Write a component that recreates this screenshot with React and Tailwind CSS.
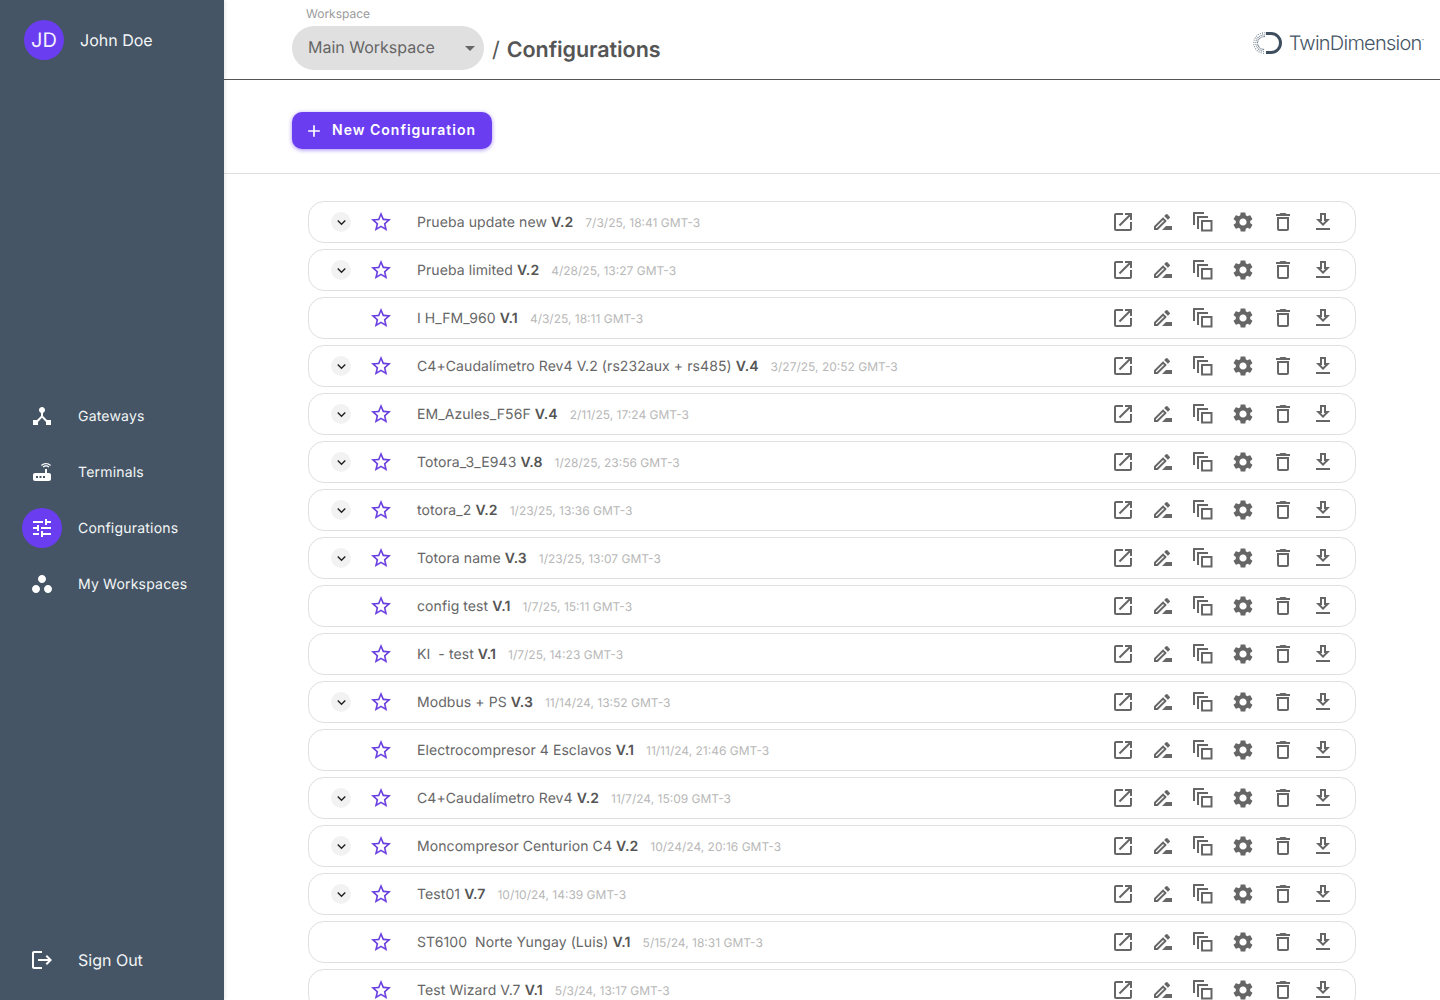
import React from "react";
import {
  MdAdd,
  MdArrowDropDown,
  MdDeleteOutline,
  MdDeviceHub,
  MdKeyboardArrowDown,
  MdLogout,
  MdOpenInNew,
  MdOutlineDriveFileRenameOutline,
  MdOutlineStarBorder,
  MdRouter,
  MdSettings,
  MdTune,
  MdWorkspaces,
} from "react-icons/md";

const configs = [
  { name: "Prueba update new", version: "V.2", date: "7/3/25, 18:41 GMT-3", expand: true },
  { name: "Prueba limited", version: "V.2", date: "4/28/25, 13:27 GMT-3", expand: true },
  { name: "I H_FM_960", version: "V.1", date: "4/3/25, 18:11 GMT-3", expand: false },
  { name: "C4+Caudalímetro Rev4 V.2 (rs232aux + rs485)", version: "V.4", date: "3/27/25, 20:52 GMT-3", expand: true },
  { name: "EM_Azules_F56F", version: "V.4", date: "2/11/25, 17:24 GMT-3", expand: true },
  { name: "Totora_3_E943", version: "V.8", date: "1/28/25, 23:56 GMT-3", expand: true },
  { name: "totora_2", version: "V.2", date: "1/23/25, 13:36 GMT-3", expand: true },
  { name: "Totora name", version: "V.3", date: "1/23/25, 13:07 GMT-3", expand: true },
  { name: "config test", version: "V.1", date: "1/7/25, 15:11 GMT-3", expand: false },
  { name: "KI  - test", version: "V.1", date: "1/7/25, 14:23 GMT-3", expand: false },
  { name: "Modbus + PS", version: "V.3", date: "11/14/24, 13:52 GMT-3", expand: true },
  { name: "Electrocompresor 4 Esclavos", version: "V.1", date: "11/11/24, 21:46 GMT-3", expand: false },
  { name: "C4+Caudalímetro Rev4", version: "V.2", date: "11/7/24, 15:09 GMT-3", expand: true },
  { name: "Moncompresor Centurion C4", version: "V.2", date: "10/24/24, 20:16 GMT-3", expand: true },
  { name: "Test01", version: "V.7", date: "10/10/24, 14:39 GMT-3", expand: true },
  { name: "ST6100  Norte Yungay (Luis)", version: "V.1", date: "5/15/24, 18:31 GMT-3", expand: false },
  { name: "Test Wizard V.7", version: "V.1", date: "5/3/24, 13:17 GMT-3", expand: false },
];

const navItems = [
  { label: "Gateways", icon: MdDeviceHub },
  { label: "Terminals", icon: MdRouter },
  { label: "Configurations", icon: MdTune, active: true },
  { label: "My Workspaces", icon: MdWorkspaces },
];

// three stacked sheets, front one lower right
function CopyIcon({ size }) {
  return (
    <svg width={size} height={size} viewBox="0 0 24 24" fill="currentColor">
      <path d="M2 2h11v2H4v11H2z" />
      <path d="M6 6h11v2H8v11H6z" />
      <path d="M10 10h11.5v11.5H10zm2 2v7.5h7.5V12z" fillRule="evenodd" />
    </svg>
  );
}

function DownloadIcon({ size }) {
  return (
    <svg width={size} height={size} viewBox="0 0 24 24" fill="currentColor">
      <path d="M15 9V3H9v6H5l7 7 7-7h-4zm-4 2V5h2v6h1.17L12 13.17 9.83 11H11zm-6 7h14v2H5z" />
    </svg>
  );
}

const rowActions = [
  MdOpenInNew,
  MdOutlineDriveFileRenameOutline,
  CopyIcon,
  MdSettings,
  MdDeleteOutline,
  DownloadIcon,
];

function Logo() {
  const dots = [];
  for (let i = 0; i < 15; i++) {
    const angle = ((85 + i * 13) * Math.PI) / 180;
    for (const r of [10.2, 8.2, 6.4]) {
      dots.push(
        <circle
          key={i + "-" + r}
          cx={11 + r * Math.cos(angle)}
          cy={12 - r * Math.sin(angle)}
          r="0.55"
          fill="#5b6b7b"
        />
      );
    }
  }
  return (
    <div className="flex items-center gap-[6px]">
      <svg width="30" height="24" viewBox="0 0 30 24">
        {dots}
        <path d="M13 2.5h5a9.5 9.5 0 0 1 0 19h-5" fill="none" stroke="#3f4f5f" strokeWidth="3" />
      </svg>
      <span className="text-[20px] font-light tracking-[-0.75px] text-[#455565]">
        TwinDimension<span className="align-super text-[4px] tracking-normal">™</span>
      </span>
    </div>
  );
}

function ConfigRow({ config }) {
  return (
    <div className="flex h-[42px] shrink-0 items-center rounded-[16px] border border-[#e0e0e0] pr-[12px]">
      <div className="flex w-[64px] shrink-0 justify-center">
        {config.expand && (
          <span className="flex h-[20px] w-[20px] items-center justify-center rounded-full bg-[#f2f2f2] text-[#222]">
            <MdKeyboardArrowDown size={17} />
          </span>
        )}
      </div>
      <MdOutlineStarBorder size={24} className="-ml-[4px] shrink-0 text-[#6a3fe0]" />
      <div className="ml-[24px] flex items-baseline whitespace-pre">
        <span className="text-[14px] tracking-[0.08px] text-[#666]">
          {config.name} <b className="font-semibold text-[#555]">{config.version}</b>
        </span>
        <span className="ml-[12px] text-[12px] text-[#b8b8b8]">{config.date}</span>
      </div>
      <div className="ml-auto flex shrink-0">
        {rowActions.map((Icon, i) => (
          <span key={i} className="flex w-[40px] justify-center text-[#666]">
            <Icon size={24} />
          </span>
        ))}
      </div>
    </div>
  );
}

export default function App() {
  return (
    <div className="flex h-screen overflow-hidden bg-white font-['Inter',sans-serif] [text-rendering:geometricPrecision]">
      {/* Sidebar */}
      <aside className="z-10 flex w-[224px] shrink-0 flex-col bg-[#455565] text-[#f3f5f7] shadow-[1px_0_4px_rgba(0,0,0,0.1)]">
        <div className="flex items-center gap-[16px] pl-[24px] pt-[20px]">
          <div className="flex h-[40px] w-[40px] items-center justify-center rounded-full bg-[#6a3df0] text-[20px] text-[#f3f0ff]">
            JD
          </div>
          <span className="text-[16px]">John Doe</span>
        </div>
        <nav className="mt-[328px] flex flex-col">
          {navItems.map(({ label, icon: Icon, active }) => (
            <div key={label} className="flex h-[56px] items-center pl-[22px]">
              <span
                className={
                  active
                    ? "flex h-[40px] w-[40px] items-center justify-center rounded-full bg-[#6a3df0]"
                    : "flex h-[40px] w-[40px] items-center justify-center"
                }
              >
                <Icon size={24} className="text-white" />
              </span>
              <span className="ml-[16px] text-[14px] tracking-[0.2px]">{label}</span>
            </div>
          ))}
        </nav>
        <div className="mt-auto flex items-center pb-[20px] pl-[22px]">
          <span className="flex h-[40px] w-[40px] items-center justify-center">
            <MdLogout size={24} className="text-white" />
          </span>
          <span className="ml-[16px] text-[16px]">Sign Out</span>
        </div>
      </aside>

      {/* Main */}
      <main className="flex min-w-0 flex-1 flex-col">
        <header className="flex h-[80px] shrink-0 items-start border-b border-[#555] pl-[68px] pr-[16px]">
          <div className="pt-[7px]">
            <div className="pl-[14px] text-[12px] leading-[14px] text-[#9a9a9a]">Workspace</div>
            <div className="mt-[5px] flex h-[44px] w-[192px] items-center justify-between rounded-[22px] bg-[#e0e0e0] pl-[16px] pr-[2px] text-[16px] text-[#666]">
              <span className="pb-[2px]">Main Workspace</span>
              <MdArrowDropDown size={24} className="text-[#666]" />
            </div>
          </div>
          <div className="ml-[8px] mt-[37px] text-[21.5px] leading-[26px] text-[#555]">
            / <span className="ml-[1px] font-semibold tracking-[-0.08px]">Configurations</span>
          </div>
          <div className="ml-auto mt-[28px]">
            <Logo />
          </div>
        </header>

        <div className="flex h-[94px] shrink-0 items-start border-b border-[#e0e0e0] pl-[68px] pt-[32px]">
          <button className="flex h-[37px] w-[200px] items-center rounded-[10px] bg-[#6a3df0] pl-[12px] text-[14px] font-semibold tracking-[1px] text-white shadow-[0_1px_4px_rgba(106,61,240,0.6)]">
            <MdAdd size={20} />
            <span className="ml-[8px] pb-[2px]">New Configuration</span>
          </button>
        </div>

        <div className="flex flex-col gap-[6px] pl-[84px] pr-[84px] pt-[27px]">
          {configs.map((c) => (
            <ConfigRow key={c.name + c.date} config={c} />
          ))}
        </div>
      </main>
    </div>
  );
}
